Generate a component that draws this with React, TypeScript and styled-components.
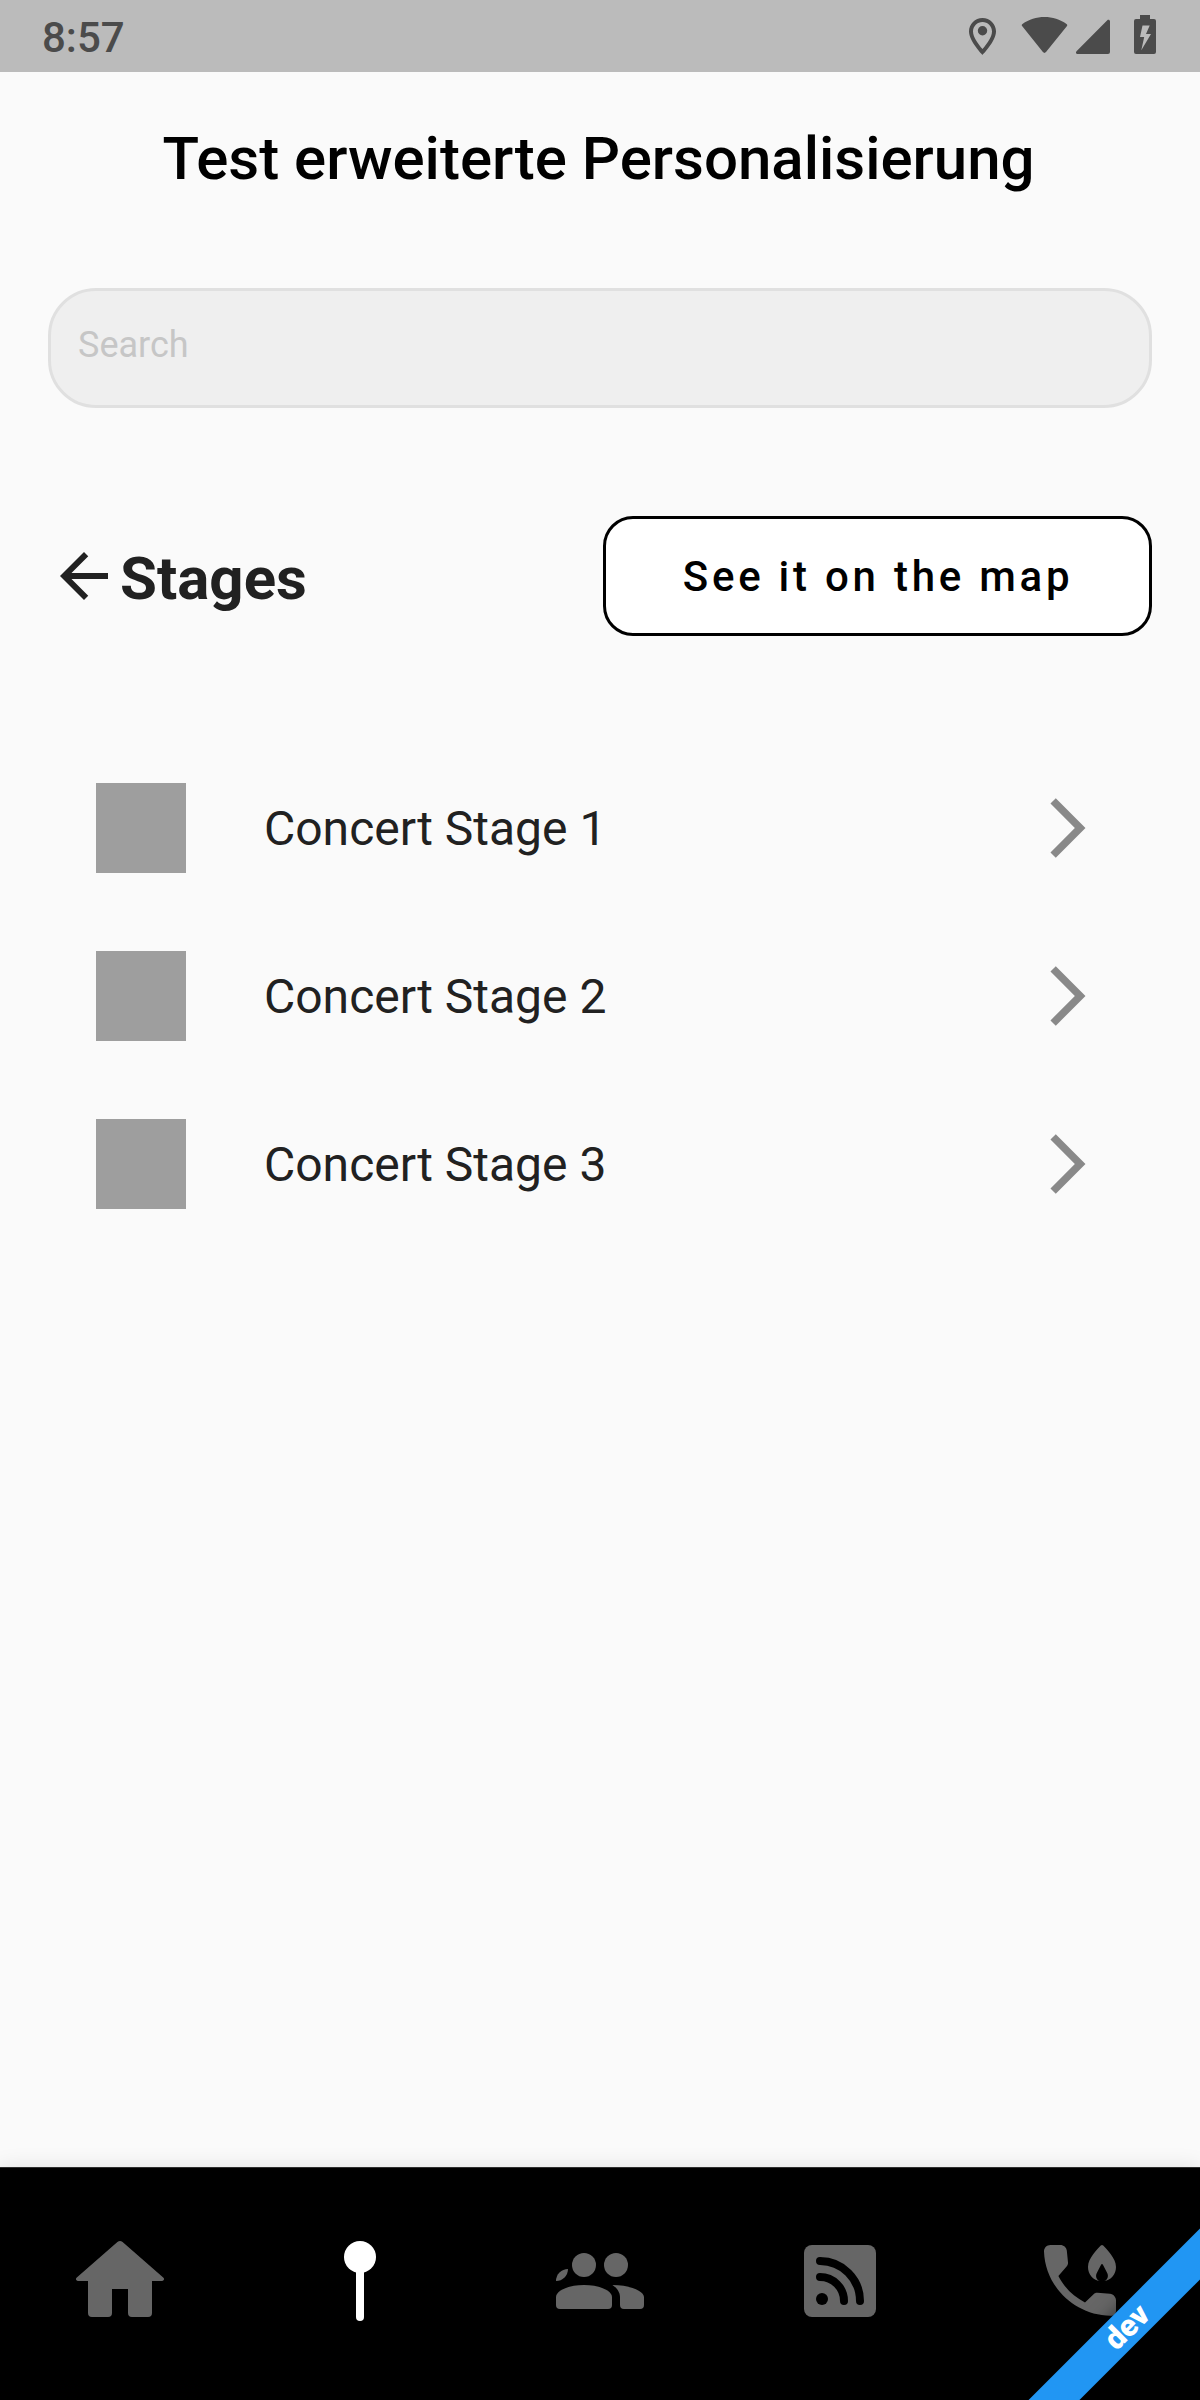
import React from "react";
import styled, { createGlobalStyle } from "styled-components";

const GlobalStyle = createGlobalStyle`
  * { box-sizing: border-box; }
  body { margin: 0; background: #fafafa; }
`;

const Screen = styled.div`
  position: relative;
  width: 1200px;
  height: 2400px;
  overflow: hidden;
  display: flex;
  flex-direction: column;
  background: #fafafa;
  color: #212121;
  font-family: Roboto, "Liberation Sans", sans-serif;
`;

const StatusBar = styled.header`
  flex: none;
  height: 72px;
  padding: 0 42px;
  display: flex;
  align-items: center;
  justify-content: space-between;
  background: #bbbbbb;
  color: #4b4b4b;
`;

const Clock = styled.span`
  font-size: 42px;
  font-weight: 500;
  line-height: 72px;
  padding-top: 4px;
`;

const StatusIcons = styled.svg`
  flex: none;
  width: 200px;
  height: 72px;
  fill: currentColor;
`;

const AppBar = styled.div`
  flex: none;
  height: 173px;
  padding-right: 3px;
  display: flex;
  align-items: center;
  justify-content: center;
`;

const Title = styled.h1`
  margin: 0;
  font-size: 60px;
  font-weight: 500;
  line-height: 70px;
  color: #000;
`;

const SearchBox = styled.input`
  flex: none;
  height: 120px;
  margin: 43px 48px 0;
  padding: 0 27px 6px;
  border: 3px solid #e0e0e0;
  border-radius: 48px;
  background: #efefef;
  font: 400 36px Roboto, "Liberation Sans", sans-serif;
  &::placeholder { color: #c6c6c6; opacity: 1; }
`;

const Heading = styled.section`
  flex: none;
  height: 120px;
  margin: 108px 48px 0;
  display: flex;
  align-items: center;
`;

const BackIcon = styled.svg`
  width: 72px;
  height: 72px;
  fill: currentColor;
`;

const HeadingText = styled.h2`
  flex: 1;
  margin: 0;
  padding-top: 5px;
  font-size: 60px;
  font-weight: 700;
  line-height: 70px;
`;

const MapButton = styled.button`
  width: 549px;
  height: 120px;
  padding: 0 0 0 1px;
  border: 3px solid #000;
  border-radius: 30px;
  background: #fff;
  color: #000;
  font: 500 42px Roboto, "Liberation Sans", sans-serif;
  letter-spacing: 3.75px;
`;

const StageList = styled.ul`
  flex: 1;
  margin: 108px 0 0;
  padding: 0 97px 0 96px;
  list-style: none;
`;

const StageRow = styled.li`
  height: 168px;
  display: flex;
  align-items: center;
  gap: 78px;
`;

const Thumbnail = styled.div`
  width: 90px;
  height: 90px;
  background: #9e9e9e;
`;

const StageName = styled.span`
  flex: 1;
  padding-top: 2px;
  font-size: 48px;
  line-height: 56px;
`;

const Chevron = styled.svg`
  width: 72px;
  height: 72px;
  fill: #898989;
`;

const NavBar = styled.nav`
  flex: none;
  height: 233px;
  display: flex;
  align-items: center;
  border-top: 1px solid #303030;
  background: #000;
  box-shadow: 0 0 20px rgba(0, 0, 0, 0.1);
`;

const NavItem = styled.a<{ $active?: boolean }>`
  flex: 1;
  display: flex;
  justify-content: center;
  padding-bottom: 6px;
  color: ${(p) => (p.$active ? "#ffffff" : "#666666")};
`;

const NavIcon = styled.svg`
  width: 96px;
  height: 96px;
  fill: currentColor;
`;

const DevBanner = styled.div`
  position: absolute;
  right: -167.4px;
  bottom: 54.6px;
  width: 480px;
  height: 36px;
  transform: rotate(-45deg);
  background: #2196f3;
  box-shadow: 0 0 18px rgba(0, 0, 0, 0.5);
  color: #fff;
  font-size: 30.6px;
  font-weight: 900;
  line-height: 36px;
  text-align: center;
`;

const stages = ["Concert Stage 1", "Concert Stage 2", "Concert Stage 3"];

const navItems = [
  {
    id: "home",
    icon: (
      <path d="M11.35 2.25a1 1 0 0 1 1.3 0L22.8 11.1c.4.35.2.9-.3.9H20v8a1 1 0 0 1-1 1h-4a1 1 0 0 1-1-1v-6h-4v6a1 1 0 0 1-1 1H5a1 1 0 0 1-1-1v-8H1.5c-.5 0-.7-.55-.3-.9z" />
    ),
  },
  {
    id: "places",
    active: true,
    icon: (
      <>
        <circle cx="12" cy="6" r="4" />
        <rect x="11" y="8" width="2" height="14" rx="1" />
      </>
    ),
  },
  {
    id: "people",
    icon: (
      <>
        <circle cx="8" cy="8" r="3" />
        <circle cx="16" cy="8" r="3" />
        <path d="M1 16c0-1.5 2.9-3 7-3s7 1.5 7 3v2a1 1 0 0 1-1 1H2a1 1 0 0 1-1-1z" />
        <path d="M15.1 13c4.6 0 7.9 1.6 7.9 3v2a1 1 0 0 1-1 1h-4a1 1 0 0 1-1-1v-2c0-1.2-.8-2.3-1.9-3z" />
        <path d="M1 12a3 3 0 0 1 3-3 3 3 0 0 1-3 3z" />
      </>
    ),
  },
  {
    id: "feed",
    icon: (
      <>
        <rect x="3" y="3" width="18" height="18" rx="2" />
        <circle cx="7.5" cy="16.5" r="1.5" fill="#000" />
        <path
          d="M7 11a6 6 0 0 1 6 6M7 7a10 10 0 0 1 10 10"
          fill="none"
          stroke="#000"
          strokeWidth="2"
          strokeLinecap="round"
        />
      </>
    ),
  },
  {
    id: "emergency",
    icon: (
      <>
        <path d="M4.6 3h2.5c.8 0 1.5.6 1.6 1.4L9 7.4c.03.35-.1.7-.35.95L6.6 10.75c1.5 2.9 3.75 5.15 6.65 6.6l2.15-2.05c.25-.25.6-.4.95-.35l3.15.25c.85.1 1.5.8 1.5 1.65v2.6c0 .8-.6 1.3-1.4 1.25C10.500 20.500 3.300 13.300 3 4.600 3 3.700 3.700 3 4.600 3z" />
        <path d="M17.2 3.15a.4.4 0 0 1 .6 0C18.6 4 21 6.3 21 8.5c0 1.9-1.3 3.3-2.9 3.5.8-.3 1.1-1.200.7-2l-1.1-2.100c-.1-.2-.3-.2-.4 0L16.200 10c-.4.8-.1 1.700.7 2C15.300 11.800 14 10.400 14 8.500c0-2.200 2.400-4.500 3.200-5.350z" />
      </>
    ),
  },
];

export default function App() {
  return (
    <Screen>
      <GlobalStyle />
      <StatusBar>
        <Clock>8:57</Clock>
        <StatusIcons viewBox="958 0 200 72">
          <path
            fillRule="evenodd"
            d="M982.5 18c-7.5 0-13.5 6-13.5 13.3C969 41.3 982.5 55 982.5 55S996 41.3 996 31.3C996 24 990 18 982.5 18zm0 4c5.2 0 9.5 4.2 9.5 9.4 0 5.6-5.3 12.6-9.5 17.6-4.2-5-9.5-12-9.5-17.6 0-5.2 4.3-9.4 9.5-9.4z"
          />
          <circle cx="982.5" cy="30.8" r="4.7" />
          <path d="M1022.3 26.2c-.8-.7-.7-1.7.2-2.3 6.5-4.5 14-6.9 22-6.9s15.5 2.4 22 6.9c.9.6 1 1.6.3 2.4l-20.8 25.800c-.9 1.100-2.200 1.100-3.100 0z" />
          <path d="M1107.3 20.3c1-.9 2.7-.4 2.7 1.2V52a2 2 0 0 1-2 2h-30.5c-1.5 0-2.1-1.6-1-2.7z" />
          <path
            fillRule="evenodd"
            d="M1140 15h10v4h4a2 2 0 0 1 2 2v31a2 2 0 0 1-2 2h-18a2 2 0 0 1-2-2V21a2 2 0 0 1 2-2h4zm2.5 10.500L1140 37h4.200l-2.900 13.300L1151 34h-5l3.700-8.500z"
          />
        </StatusIcons>
      </StatusBar>

      <AppBar>
        <Title>Test erweiterte Personalisierung</Title>
      </AppBar>

      <SearchBox placeholder="Search" />

      <Heading>
        <BackIcon viewBox="0 0 24 24">
          <path d="M20 11H7.83l5.59-5.59L12 4l-8 8 8 8 1.41-1.41L7.83 13H20v-2z" />
        </BackIcon>
        <HeadingText>Stages</HeadingText>
        <MapButton>See it on the map</MapButton>
      </Heading>

      <StageList>
        {stages.map((name) => (
          <StageRow key={name}>
            <Thumbnail />
            <StageName>{name}</StageName>
            <Chevron viewBox="0 0 24 24">
              <path d="M6.49 20.13l1.77 1.77 9.9-9.9-9.9-9.9-1.77 1.77L14.62 12l-8.13 8.13z" />
            </Chevron>
          </StageRow>
        ))}
      </StageList>

      <NavBar>
        {navItems.map((item) => (
          <NavItem key={item.id} $active={item.active}>
            <NavIcon viewBox="0 0 24 24">{item.icon}</NavIcon>
          </NavItem>
        ))}
      </NavBar>

      <DevBanner>dev</DevBanner>
    </Screen>
  );
}
